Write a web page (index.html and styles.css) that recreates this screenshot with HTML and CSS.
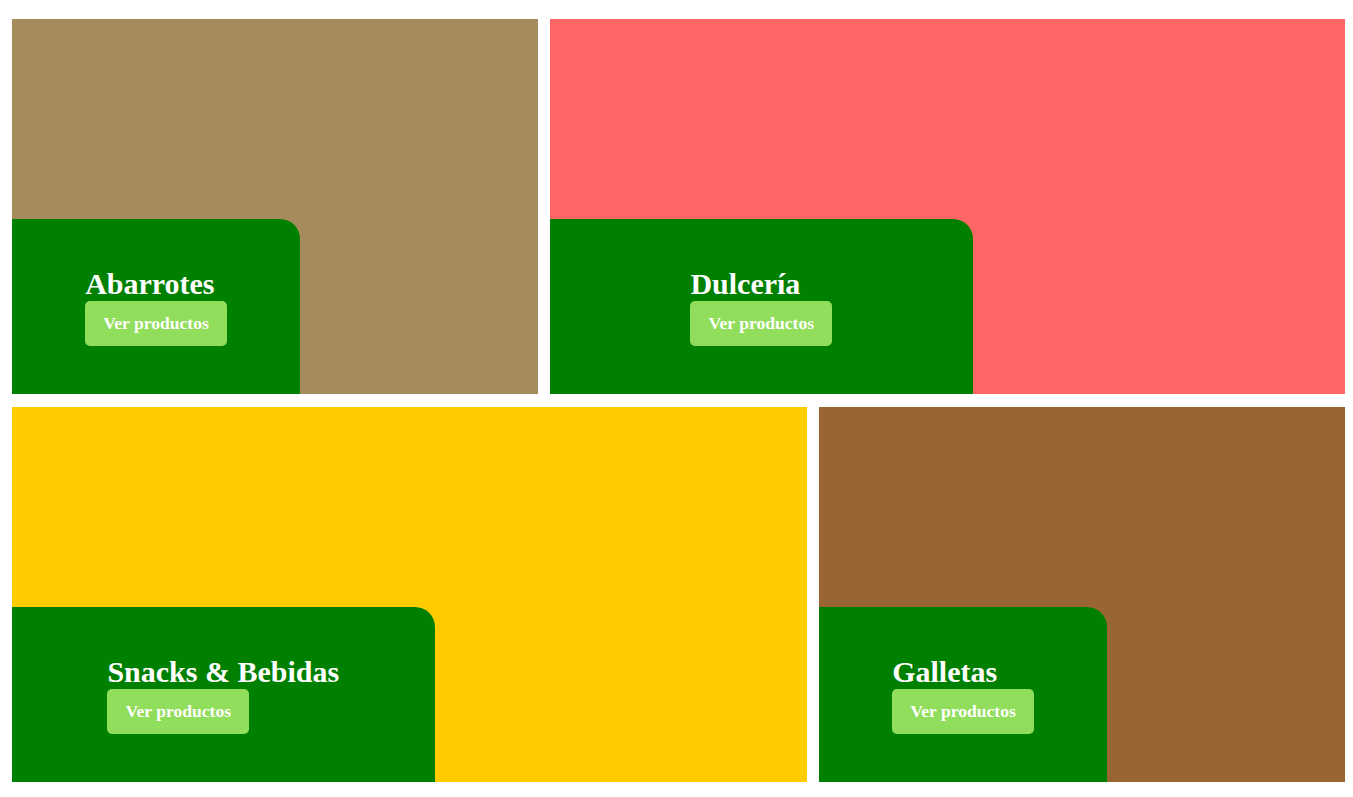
FILE: index.html
```html
<!DOCTYPE html>
<html lang="es">
<head>
<meta charset="utf-8">
<title>Categorías</title>
<link rel="stylesheet" href="styles.css">
</head>
<body>
<main class="grid">
  <div class="row row-a">
    <section class="card card-abarrotes">
      <div class="panel">
        <div class="panel-inner">
          <h2 class="title">Abarrotes</h2>
          <a class="btn" href="#">Ver productos</a>
        </div>
      </div>
    </section>
    <section class="card card-dulceria">
      <div class="panel">
        <div class="panel-inner">
          <h2 class="title">Dulcería</h2>
          <a class="btn" href="#">Ver productos</a>
        </div>
      </div>
    </section>
  </div>
  <div class="row row-b">
    <section class="card card-snacks">
      <div class="panel">
        <div class="panel-inner">
          <h2 class="title">Snacks &amp; Bebidas</h2>
          <a class="btn" href="#">Ver productos</a>
        </div>
      </div>
    </section>
    <section class="card card-galletas">
      <div class="panel">
        <div class="panel-inner">
          <h2 class="title">Galletas</h2>
          <a class="btn" href="#">Ver productos</a>
        </div>
      </div>
    </section>
  </div>
</main>
</body>
</html>
```
FILE: styles.css
```css
* { box-sizing: border-box; }
html, body { margin: 0; padding: 0; background: #ffffff; }
body { font-family: "Liberation Serif", "Times New Roman", serif; }

.grid {
  display: flex;
  flex-direction: column;
  gap: 13px;
  padding: 19px 8px 0 12px;
}

.row {
  display: grid;
  column-gap: 12px;
}
.row-a { grid-template-columns: 526fr 795fr; }
.row-b { grid-template-columns: 795fr 526fr; }

.card {
  height: 375px;
  display: flex;
  flex-direction: column;
  justify-content: flex-end;
}
.card-abarrotes { background: #a68c5d; }
.card-dulceria { background: #ff6666; }
.card-snacks { background: #ffcc00; }
.card-galletas { background: #996633; }

.panel {
  width: calc(50% + 25px);
  height: 175px;
  padding-bottom: 1px;
  background: #008000;
  border-top-right-radius: 20px;
  display: flex;
  align-items: center;
  justify-content: center;
}

.panel-inner {
  display: flex;
  flex-direction: column;
  align-items: flex-start;
  gap: 0;
}

.title {
  margin: 0;
  color: #ffffff;
  font-size: 30px;
  font-weight: bold;
  line-height: 35px;
}

.btn {
  display: inline-block;
  background: #91dd5c;
  color: #ffffff;
  font-weight: bold;
  font-size: 17.6px;
  line-height: 20px;
  padding: 12px 18px 13px;
  border-radius: 5px;
  text-decoration: none;
}
```
